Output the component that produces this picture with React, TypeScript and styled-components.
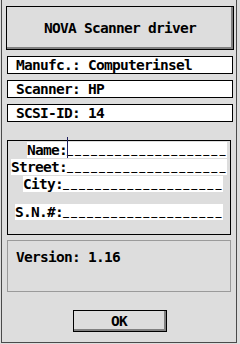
import styled, { createGlobalStyle } from 'styled-components'

const Global = createGlobalStyle`
  html, body {
    margin: 0;
    padding: 0;
    background: #dddddd;
  }
  body {
    font-family: "DejaVu Sans Mono", "Liberation Mono", monospace;
    font-weight: bold;
    font-size: 14.5px;
    letter-spacing: -0.73px;
    color: #000;
  }
`

const Frame = styled.div`
  box-sizing: border-box;
  width: 236px;
  height: 343px;
  margin-left: 1px;
  padding-top: 6px;
  border: 1px solid #4a4a4a;
  border-top: none;
  display: flex;
  flex-direction: column;
  background: #dddddd;
`

const TitleBox = styled.div`
  box-sizing: border-box;
  width: 228px;
  height: 44px;
  margin-left: 4px;
  border: 1px solid #000;
  box-shadow: inset -2px -2px 0 #808080;
  display: flex;
  align-items: center;
  justify-content: center;
  line-height: 16px;
`

const InfoBox = styled.div`
  box-sizing: border-box;
  width: 226px;
  height: 18px;
  margin: 6px 0 0 5px;
  border: 1px solid #000;
  background: #fff;
  line-height: 16px;
  padding-left: 8px;
  white-space: pre;
  &:first-of-type {
    margin-top: 5px;
  }
`

const FormBox = styled.div`
  position: relative;
  box-sizing: border-box;
  width: 224px;
  height: 95px;
  margin: 18px 0 0 5px;
  padding-top: 1px;
  border: 1px solid #000;
  display: flex;
  flex-direction: column;
  gap: 1px;
`

const Field = styled.div<{ $indent: number; $gap?: number }>`
  align-self: flex-start;
  margin-left: ${(p) => p.$indent}px;
  margin-top: ${(p) => p.$gap ?? 0}px;
  height: 16px;
  line-height: 16px;
  background: #fff;
  white-space: pre;
  display: flex;
`

const Blanks = styled.span`
  font-size: 10px;
  letter-spacing: 2px;
`

const Cursor = styled.div`
  position: absolute;
  left: 59px;
  top: -4px;
  width: 1px;
  height: 21px;
  background: #202060;
`

const VersionBox = styled.div`
  box-sizing: border-box;
  width: 224px;
  height: 52px;
  margin: 5px 0 0 5px;
  padding: 8px 0 0 8px;
  border: 1px solid #9a9a9a;
  line-height: 16px;
`

const OkButton = styled.button`
  box-sizing: border-box;
  width: 94px;
  height: 22px;
  margin: 18px 0 0 71px;
  padding: 0 2px 1px 0;
  border: 1px solid #000;
  background: #dddddd;
  box-shadow: inset -2px -2px 0 #808080;
  font: inherit;
  letter-spacing: inherit;
  color: #000;
  line-height: 16px;
`

const LINE = '____________________'

export default function App() {
  return (
    <>
      <Global />
      <Frame>
        <TitleBox>NOVA Scanner driver</TitleBox>
        <InfoBox>Manufc.: Computerinsel</InfoBox>
        <InfoBox>Scanner: HP</InfoBox>
        <InfoBox>SCSI-ID: 14</InfoBox>
        <FormBox>
          <Cursor />
          <Field $indent={19}>Name:<Blanks>{LINE}</Blanks></Field>
          <Field $indent={3}>Street:<Blanks>{LINE}</Blanks></Field>
          <Field $indent={15}>City:<Blanks>{LINE}</Blanks></Field>
          <Field $indent={7} $gap={11}>S.N.#:<Blanks>{LINE}</Blanks></Field>
        </FormBox>
        <VersionBox>Version: 1.16</VersionBox>
        <OkButton>OK</OkButton>
      </Frame>
    </>
  )
}
